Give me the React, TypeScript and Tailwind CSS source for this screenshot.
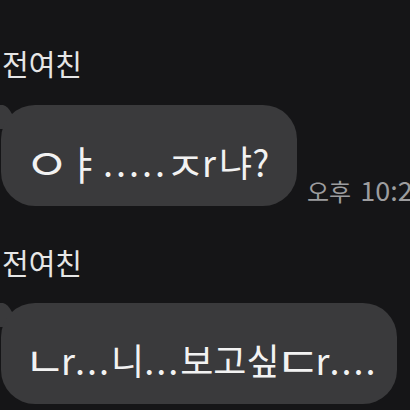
import React from "react";

const font = { fontFamily: '"Noto Sans CJK KR", "Noto Sans", sans-serif' };

function Tail() {
  return (
    <svg className="absolute left-[-1px] top-0" width="16" height="24" viewBox="0 0 16 24">
      <path d="M0 0 L4 0 Q9 1 13 9 L16 24 L0 24 Z" fill="#3a3a3c" />
    </svg>
  );
}

function Bubble({ children, width, time }: { children: React.ReactNode; width: string; time?: React.ReactNode }) {
  return (
    <div className="flex items-end">
      <div className={`relative h-[101px] ${width} shrink-0`}>
        <Tail />
        <div className="absolute inset-0 left-[1px] flex items-center rounded-[34px] bg-[#3a3a3c] pl-[28px] pt-[10px]">
          <div className="flex items-baseline whitespace-nowrap text-[36px] leading-none text-[#f2f2f2]">
            {children}
          </div>
        </div>
      </div>
      {time}
    </div>
  );
}

export default function App() {
  return (
    <div className="h-[410px] w-[410px] overflow-hidden bg-[#151517]" style={font}>
      <div className="flex flex-col pt-[49px]">
        <div className="pl-[2px] text-[29px] leading-none text-[#e6e6e6]">전여친</div>
        <div className="mt-[27px]">
          <Bubble
            width="w-[297px]"
            time={
              <span className="mb-[3px] ml-[10px] flex items-baseline whitespace-nowrap leading-none text-[#9d9d9f]">
                <span className="text-[24px]">오후</span>
                <span className="ml-[9px] text-[27px]">10:25</span>
              </span>
            }
          >
            <span className="inline-flex w-[36px] justify-center">
              <span className="inline-flex w-[18px] justify-center scale-x-[1.4] scale-y-[1.2]">ㅇ</span>
            </span>
            <span className="inline-flex w-[38px] justify-center">
              <span className="inline-flex w-[12px] justify-center translate-y-[1px] scale-x-[1.05] scale-y-[1.1]">ㅑ</span>
            </span>
            <span className="tracking-[3px]">.....</span>
            <span className="inline-flex w-[34px] justify-center">
              <span className="inline-flex w-[22px] justify-center translate-y-[2px] scale-x-[1.2] scale-y-[1.05]">ㅈ</span>
            </span>
            <span>r</span>
            <span className="ml-[3px]">냐?</span>
          </Bubble>
        </div>
        <div className="mt-[42px] pl-[2px] text-[29px] leading-none text-[#e6e6e6]">전여친</div>
        <div className="mt-[26px]">
          <Bubble width="w-[397px]">
            <span className="inline-flex w-[32px] justify-center">
              <span className="inline-flex w-[18px] justify-center scale-x-[1.25] scale-y-[1.15]">ㄴ</span>
            </span>
            <span>r</span>
            <span className="tracking-[2px]">...</span>
            <span>니</span>
            <span className="tracking-[2px]">...</span>
            <span>보고싶</span>
            <span className="inline-flex w-[36px] justify-center">
              <span className="inline-flex w-[22px] justify-center scale-x-[1.4] scale-y-[1.15]">ㄷ</span>
            </span>
            <span>r</span>
            <span className="tracking-[2px]">....</span>
          </Bubble>
        </div>
      </div>
    </div>
  );
}
